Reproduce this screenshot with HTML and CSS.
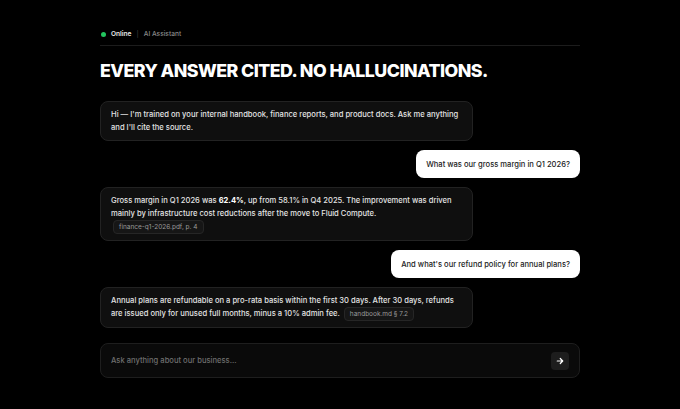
FILE: index.html
```html
<!DOCTYPE html>
<html lang="en">
<head>
<meta charset="utf-8">
<title>AI Assistant</title>
<link rel="stylesheet" href="styles.css">
</head>
<body>
<main class="page">
  <header class="status">
    <span class="dot"></span>
    <span class="status-label">Online</span>
    <span class="sep">|</span>
    <span class="status-sub">AI Assistant</span>
  </header>

  <h1 class="title">EVERY ANSWER CITED. NO HALLUCINATIONS.</h1>

  <section class="chat">
    <div class="msg bot">Hi — I'm trained on your internal handbook, finance reports, and product docs. Ask me anything and I'll cite the source.</div>

    <div class="msg user">What was our gross margin in Q1 2026?</div>

    <div class="msg bot">Gross margin in Q1 2026 was <strong>62.4%</strong>, up from 58.1% in Q4 2025. The improvement was driven mainly by infrastructure cost reductions after the move to Fluid Compute. <span class="cite">finance-q1-2026.pdf, p. 4</span></div>

    <div class="msg user">And what's our refund policy for annual plans?</div>

    <div class="msg bot">Annual plans are refundable on a pro-rata basis within the first 30 days. After 30 days, refunds are issued only for unused full months, minus a 10% admin fee. <span class="cite">handbook.md § 7.2</span></div>
  </section>

  <form class="composer">
    <input class="composer-input" type="text" placeholder="Ask anything about our business...">
    <button class="send" type="button" aria-label="Send">
      <svg width="8" height="8" viewBox="0 0 16 16" fill="none" stroke="#fff" stroke-width="2.4" stroke-linecap="round" stroke-linejoin="round">
        <path d="M2.5 8h11M8.5 3l5 5-5 5"/>
      </svg>
    </button>
  </form>
</main>
</body>
</html>
```

FILE: styles.css
```css
* { box-sizing: border-box; }

html, body {
  margin: 0;
  background: #000;
  color: #e6e6e6;
  font-family: Inter, "Noto Sans", "Liberation Sans", sans-serif;
  -webkit-font-smoothing: antialiased;
}

.page {
  width: 480px;
  margin: 0 auto;
  padding-top: 28px;
}

/* top status line */
.status {
  display: flex;
  align-items: center;
  gap: 5px;
  height: 12px;
  padding-bottom: 5px;
  border-bottom: 1px solid #1c1c1c;
  box-sizing: content-box;
  font-size: 6.6px;
}
.dot {
  width: 5px;
  height: 5px;
  border-radius: 50%;
  background: #22c55e;
  margin-left: 1px;
}
.status-label { font-weight: 600; color: #e8e8e8; }
.sep { color: #444; }
.status-sub { color: #8a8a8a; font-weight: 500; }

.title {
  margin: 14px 0 19px;
  font-size: 17.8px;
  line-height: 22px;
  font-weight: 800;
  letter-spacing: -0.55px;
  color: #fff;
}

/* conversation */
.chat {
  display: flex;
  flex-direction: column;
  gap: 9px;
}
.msg {
  font-size: 7.6px;
  line-height: 13px;
  font-weight: 500;
  padding: 6px 10px;
  border-radius: 8px;
}
.msg.bot {
  align-self: flex-start;
  width: 373px;
  background: #0f0f0f;
  border: 1px solid #222;
  color: #e4e4e4;
}
.msg.bot strong { color: #fff; font-weight: 700; }
.msg.user {
  align-self: flex-end;
  background: #fff;
  color: #222;
  padding: 7.5px 10px;
}

.cite {
  display: inline-block;
  vertical-align: middle;
  margin-left: 2px;
  padding: 0 5px;
  line-height: 12px;
  font-size: 6.5px;
  font-weight: 400;
  color: #9a9a9a;
  background: #161616;
  border: 1px solid #262626;
  border-radius: 4px;
}

/* input bar */
.composer {
  margin-top: 15px;
  display: flex;
  align-items: center;
  height: 35px;
  padding: 0 10px;
  background: #0a0a0a;
  border: 1px solid #1e1e1e;
  border-radius: 8px;
}
.composer-input {
  flex: 1;
  background: transparent;
  border: 0;
  outline: none;
  color: #ddd;
  font: inherit;
  font-size: 7.6px;
  font-weight: 500;
  padding: 0;
}
.composer-input::placeholder { color: #6f6f6f; }
.send {
  width: 18px;
  height: 18px;
  border: 0;
  border-radius: 4px;
  background: #1d1d1d;
  display: grid;
  place-items: center;
  padding: 0;
}
```
